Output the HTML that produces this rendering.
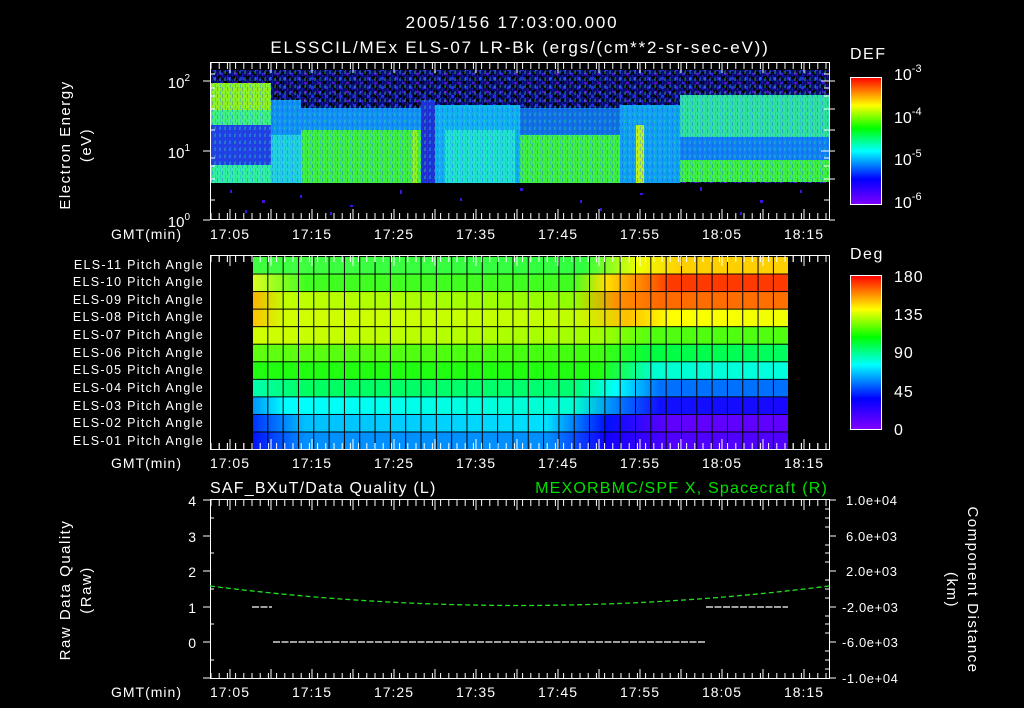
<!DOCTYPE html>
<html><head><meta charset="utf-8"><style>
html,body{margin:0;padding:0;background:#000;width:1024px;height:708px;overflow:hidden}
svg text{font-family:"Liberation Sans",sans-serif;fill:#fff}
</style></head><body>
<svg width="1024" height="708" xmlns="http://www.w3.org/2000/svg">
<defs>
<linearGradient id="cb" x1="0" y1="1" x2="0" y2="0">
<stop offset="0" stop-color="#8000ff"/><stop offset="0.2" stop-color="#0000ff"/><stop offset="0.42" stop-color="#00ffff"/><stop offset="0.6" stop-color="#00ff00"/><stop offset="0.78" stop-color="#ffff00"/><stop offset="1" stop-color="#ff0000"/>
</linearGradient>
<pattern id="noise" width="14" height="9" patternUnits="userSpaceOnUse">
<rect width="14" height="9" fill="#0a0a70"/><rect x="0" y="0" width="4" height="3" fill="#000"/><rect x="7" y="4" width="4" height="3" fill="#000"/><rect x="3" y="5" width="3" height="3" fill="#2828e0"/><rect x="10" y="1" width="3" height="2" fill="#5010c0"/><rect x="11" y="6" width="2" height="3" fill="#000"/>
</pattern>
<pattern id="vn" width="5" height="7" patternUnits="userSpaceOnUse">
<rect x="0" y="0" width="1" height="4" fill="#20a0ff" opacity="0.45"/><rect x="2" y="3" width="1" height="4" fill="#2040ff" opacity="0.35"/><rect x="4" y="1" width="1" height="3" fill="#40ff80" opacity="0.3"/>
</pattern>
</defs>

<g letter-spacing="1.8"><text x="512" y="28" font-size="17" text-anchor="middle">2005/156 17:03:00.000</text>
<text x="520" y="53" font-size="17" text-anchor="middle">ELSSCIL/MEx ELS-07 LR-Bk  (ergs/(cm**2-sr-sec-eV))</text></g>

<!-- top spectrogram -->
<rect x="211" y="70" width="618" height="113" fill="url(#noise)"/>
<rect x="211" y="83" width="60" height="40" fill="#90f020"/>
<rect x="211" y="110" width="60" height="15" fill="#40f080"/>
<rect x="211" y="125" width="60" height="40" fill="#2040e0"/>
<rect x="211" y="165" width="60" height="18" fill="#30f0a0"/>
<rect x="271" y="100" width="30" height="35" fill="#1090f0"/>
<rect x="271" y="135" width="30" height="48" fill="#20d0e0"/>
<rect x="301" y="108" width="120" height="25" fill="#1090f0"/>
<rect x="301" y="130" width="120" height="53" fill="#40f040"/>
<rect x="412" y="130" width="6" height="53" fill="#90f020"/>
<rect x="421" y="100" width="14" height="83" fill="#2030d0"/>
<rect x="435" y="105" width="85" height="78" fill="#10b0f0"/>
<rect x="445" y="130" width="70" height="53" fill="#20e0d0"/>
<rect x="520" y="108" width="100" height="27" fill="#1070e0"/>
<rect x="520" y="135" width="100" height="48" fill="#40f040"/>
<rect x="620" y="105" width="60" height="78" fill="#10a0f0"/>
<rect x="636" y="125" width="8" height="58" fill="#c0f020"/>
<rect x="680" y="95" width="149" height="42" fill="#30e0a0"/>
<rect x="680" y="137" width="149" height="23" fill="#1080f0"/>
<rect x="680" y="160" width="149" height="22" fill="#40f040"/>
<rect x="211" y="70" width="618" height="113" fill="url(#vn)"/>
<rect x="211" y="183" width="618" height="36" fill="#000"/>
<g fill="#4010e0"><rect x="230" y="190" width="2" height="3"/><rect x="262" y="200" width="3" height="3"/><rect x="300" y="195" width="2" height="3"/><rect x="350" y="205" width="3" height="2"/><rect x="400" y="190" width="2" height="4"/><rect x="460" y="198" width="2" height="3"/><rect x="520" y="188" width="3" height="3"/><rect x="580" y="200" width="2" height="3"/><rect x="640" y="193" width="3" height="2"/><rect x="700" y="187" width="2" height="4"/><rect x="760" y="200" width="3" height="3"/><rect x="800" y="190" width="2" height="3"/><rect x="245" y="210" width="2" height="3"/><rect x="330" y="212" width="2" height="3"/><rect x="600" y="208" width="2" height="3"/><rect x="740" y="212" width="2" height="3"/></g>
<g stroke="#fff" fill="none">
<path d="M210 66H829M210 216H829M210 259H829M210 446H829M210 503H829M210 676H829" stroke-width="6" stroke-dasharray="1,7.2" stroke-dashoffset="-0.5"/>
<path d="M210 68H829M210 214H829M210 261H829M210 444H829M210 505H829M210 674H829" stroke-width="10" stroke-dasharray="1,40" stroke-dashoffset="-19.5"/>
</g>
<rect x="210.5" y="62.5" width="619" height="157" fill="none" stroke="#fff"/>
<g stroke="#fff"><path d="M203 81h7M203 151h7M203 220h7M210 74h5M210 88h5M210 96h5M210 109h5M210 130h5M210 158h5M210 166h5M210 179h5M210 200h5M829 74h-5M829 81h-8M829 88h-5M829 96h-5M829 109h-5M829 130h-5M829 151h-8M829 158h-5M829 166h-5M829 179h-5M829 200h-5M829 81h6M829 151h6M829 220h6M829 109h6M829 130h6M829 179h6"/></g>
<text x="190" y="88" font-size="15" text-anchor="end">10<tspan dy="-7" font-size="10">2</tspan></text>
<text x="190" y="158" font-size="15" text-anchor="end">10<tspan dy="-7" font-size="10">1</tspan></text>
<text x="190" y="227" font-size="15" text-anchor="end">10<tspan dy="-7" font-size="10">0</tspan></text>
<g letter-spacing="1.5"><text transform="translate(70,145) rotate(-90)" font-size="15" text-anchor="middle">Electron Energy</text>
<text transform="translate(91,145) rotate(-90)" font-size="15" text-anchor="middle">(eV)</text></g>

<text x="850" y="59" font-size="16" letter-spacing="1.5">DEF</text>
<rect x="850.5" y="77.5" width="31" height="127" fill="url(#cb)" stroke="#fff"/>
<text x="894" y="80" font-size="16">10<tspan dy="-8" font-size="11">-3</tspan></text>
<text x="894" y="123" font-size="16">10<tspan dy="-8" font-size="11">-4</tspan></text>
<text x="894" y="165" font-size="16">10<tspan dy="-8" font-size="11">-5</tspan></text>
<text x="894" y="208" font-size="16">10<tspan dy="-8" font-size="11">-6</tspan></text>

<g font-size="14" text-anchor="middle" letter-spacing="1"><text x="230" y="239">17:05</text><text x="312" y="239">17:15</text><text x="394" y="239">17:25</text><text x="476" y="239">17:35</text><text x="558" y="239">17:45</text><text x="640" y="239">17:55</text><text x="722" y="239">18:05</text><text x="804" y="239">18:15</text></g>
<text x="182" y="239" font-size="14" text-anchor="end" letter-spacing="1">GMT(min)</text>

<!-- pitch angle -->
<defs>
<linearGradient id="r11"><stop offset="0" stop-color="#40ff40"/><stop offset="0.62" stop-color="#30ff40"/><stop offset="0.72" stop-color="#f0ff00"/><stop offset="0.8" stop-color="#ffd000"/><stop offset="1" stop-color="#ffd000"/></linearGradient>
<linearGradient id="r10"><stop offset="0" stop-color="#e0ff20"/><stop offset="0.1" stop-color="#40ff20"/><stop offset="0.6" stop-color="#40ff20"/><stop offset="0.66" stop-color="#ffe000"/><stop offset="0.78" stop-color="#ff3a00"/><stop offset="1" stop-color="#ff3a00"/></linearGradient>
<linearGradient id="r09"><stop offset="0" stop-color="#ffb000"/><stop offset="0.06" stop-color="#c0ff00"/><stop offset="0.6" stop-color="#90ff00"/><stop offset="0.68" stop-color="#ff9000"/><stop offset="0.76" stop-color="#ff6a00"/><stop offset="1" stop-color="#ff7000"/></linearGradient>
<linearGradient id="r08"><stop offset="0" stop-color="#ffc000"/><stop offset="0.06" stop-color="#d0ff00"/><stop offset="0.6" stop-color="#c0ff00"/><stop offset="0.7" stop-color="#ffc000"/><stop offset="0.78" stop-color="#ffff00"/><stop offset="1" stop-color="#f0ff00"/></linearGradient>
<linearGradient id="r07"><stop offset="0" stop-color="#d0ff00"/><stop offset="0.65" stop-color="#a0ff00"/><stop offset="0.75" stop-color="#50ff10"/><stop offset="1" stop-color="#50ff10"/></linearGradient>
<linearGradient id="r06"><stop offset="0" stop-color="#60ff10"/><stop offset="0.65" stop-color="#40ff10"/><stop offset="0.75" stop-color="#00ff40"/><stop offset="1" stop-color="#00ff60"/></linearGradient>
<linearGradient id="r05"><stop offset="0" stop-color="#20ff10"/><stop offset="0.65" stop-color="#20ff10"/><stop offset="0.75" stop-color="#00ffd0"/><stop offset="1" stop-color="#00ffe0"/></linearGradient>
<linearGradient id="r04"><stop offset="0" stop-color="#00ffb0"/><stop offset="0.1" stop-color="#00ff60"/><stop offset="0.6" stop-color="#00ff70"/><stop offset="0.68" stop-color="#00ffff"/><stop offset="0.76" stop-color="#0070ff"/><stop offset="1" stop-color="#0070ff"/></linearGradient>
<linearGradient id="r03"><stop offset="0" stop-color="#0090ff"/><stop offset="0.06" stop-color="#00ffff"/><stop offset="0.6" stop-color="#00ffd0"/><stop offset="0.68" stop-color="#0080ff"/><stop offset="0.76" stop-color="#1010ff"/><stop offset="1" stop-color="#1808ff"/></linearGradient>
<linearGradient id="r02"><stop offset="0" stop-color="#0030ff"/><stop offset="0.1" stop-color="#00c0ff"/><stop offset="0.55" stop-color="#00e0ff"/><stop offset="0.66" stop-color="#0010ff"/><stop offset="0.78" stop-color="#6000ff"/><stop offset="1" stop-color="#6000ff"/></linearGradient>
<linearGradient id="r01"><stop offset="0" stop-color="#0010ff"/><stop offset="0.1" stop-color="#0090ff"/><stop offset="0.55" stop-color="#0090ff"/><stop offset="0.66" stop-color="#1000ff"/><stop offset="0.78" stop-color="#5000ff"/><stop offset="1" stop-color="#5000ff"/></linearGradient>
<pattern id="grid" x="252" y="256" width="15.32" height="17.55" patternUnits="userSpaceOnUse"><path d="M0 0V17.55M0 0H15.32" stroke="#000" stroke-width="2" fill="none"/></pattern>
</defs>
<rect x="252" y="256" width="536" height="17.5" fill="url(#r11)"/>
<rect x="252" y="273.5" width="536" height="17.6" fill="url(#r10)"/>
<rect x="252" y="291.1" width="536" height="17.6" fill="url(#r09)"/>
<rect x="252" y="308.7" width="536" height="17.6" fill="url(#r08)"/>
<rect x="252" y="326.3" width="536" height="17.6" fill="url(#r07)"/>
<rect x="252" y="343.9" width="536" height="17.6" fill="url(#r06)"/>
<rect x="252" y="361.5" width="536" height="17.6" fill="url(#r05)"/>
<rect x="252" y="379.1" width="536" height="17.6" fill="url(#r04)"/>
<rect x="252" y="396.7" width="536" height="17.6" fill="url(#r03)"/>
<rect x="252" y="414.3" width="536" height="17.6" fill="url(#r02)"/>
<rect x="252" y="431.9" width="536" height="17.6" fill="url(#r01)"/>
<rect x="252" y="256" width="537" height="194" fill="url(#grid)"/>
<g stroke="#fff" fill="none">
<path d="M210 259H829M210 446H829" stroke-width="6" stroke-dasharray="1,7.2" stroke-dashoffset="-0.5"/>
<path d="M210 261H829M210 444H829" stroke-width="10" stroke-dasharray="1,40" stroke-dashoffset="-19.5"/>
</g>
<rect x="210.5" y="255.5" width="619" height="194" fill="none" stroke="#fff"/>
<g font-size="12.5" text-anchor="end" letter-spacing="1.3">
<text x="204" y="269">ELS-11 Pitch Angle</text><text x="204" y="286">ELS-10 Pitch Angle</text><text x="204" y="304">ELS-09 Pitch Angle</text><text x="204" y="321">ELS-08 Pitch Angle</text><text x="204" y="339">ELS-07 Pitch Angle</text><text x="204" y="357">ELS-06 Pitch Angle</text><text x="204" y="374">ELS-05 Pitch Angle</text><text x="204" y="392">ELS-04 Pitch Angle</text><text x="204" y="410">ELS-03 Pitch Angle</text><text x="204" y="427">ELS-02 Pitch Angle</text><text x="204" y="445">ELS-01 Pitch Angle</text></g>
<text x="850" y="259" font-size="16" letter-spacing="1.5">Deg</text>
<rect x="850.5" y="275.5" width="31" height="154" fill="url(#cb)" stroke="#fff"/>
<g font-size="16" letter-spacing="1"><text x="894" y="282">180</text><text x="894" y="320">135</text><text x="894" y="358">90</text><text x="894" y="397">45</text><text x="894" y="435">0</text></g>
<g font-size="14" text-anchor="middle" letter-spacing="1"><text x="230" y="468">17:05</text><text x="312" y="468">17:15</text><text x="394" y="468">17:25</text><text x="476" y="468">17:35</text><text x="558" y="468">17:45</text><text x="640" y="468">17:55</text><text x="722" y="468">18:05</text><text x="804" y="468">18:15</text></g>
<text x="182" y="468" font-size="14" text-anchor="end" letter-spacing="1">GMT(min)</text>

<!-- bottom panel -->
<text x="210" y="493" font-size="16" letter-spacing="1.2">SAF_BXuT/Data Quality (L)</text>
<text x="828" y="493" font-size="16" text-anchor="end" letter-spacing="1.2" style="fill:#00e000">MEXORBMC/SPF X, Spacecraft (R)</text>
<rect x="210.5" y="499.5" width="619" height="179" fill="none" stroke="#fff"/>
<g stroke="#fff"><path d="M203 500h7M203 536h7M203 571h7M203 607h7M203 642h7M203 678h7M829 500h7M829 536h7M829 571h7M829 607h7M829 642h7M829 678h7M210 518h4M210 553h4M210 589h4M210 624h4M210 660h4M829 509h-4M829 518h-4M829 527h-4M829 545h-4M829 553h-4M829 562h-4M829 580h-4M829 589h-4M829 598h-4M829 616h-4M829 624h-4M829 633h-4M829 651h-4M829 660h-4M829 669h-4"/></g>
<path d="M210 586 Q520 625 829 586" stroke="#20e020" stroke-width="1.3" stroke-dasharray="5,3" fill="none"/>
<path d="M252 607h20M706 607h82M273 642h433" stroke="#fff" stroke-width="1.2" stroke-dasharray="7,1.5" fill="none"/>
<g font-size="14" text-anchor="end"><text x="196" y="506">4</text><text x="196" y="542">3</text><text x="196" y="577">2</text><text x="196" y="613">1</text><text x="196" y="648">0</text></g>
<g font-size="13" letter-spacing="0.6"><text x="846" y="505">1.0e+04</text><text x="846" y="541">6.0e+03</text><text x="846" y="576">2.0e+03</text><text x="842" y="612">-2.0e+03</text><text x="842" y="647">-6.0e+03</text><text x="842" y="683">-1.0e+04</text></g>
<g letter-spacing="1.5"><text transform="translate(70,590) rotate(-90)" font-size="15" text-anchor="middle">Raw Data Quality</text>
<text transform="translate(91,590) rotate(-90)" font-size="15" text-anchor="middle">(Raw)</text>
<text transform="translate(968,590) rotate(90)" font-size="15" text-anchor="middle">Component Distance</text>
<text transform="translate(947,590) rotate(90)" font-size="15" text-anchor="middle">(km)</text></g>
<g font-size="14" text-anchor="middle" letter-spacing="1"><text x="230" y="697">17:05</text><text x="312" y="697">17:15</text><text x="394" y="697">17:25</text><text x="476" y="697">17:35</text><text x="558" y="697">17:45</text><text x="640" y="697">17:55</text><text x="722" y="697">18:05</text><text x="804" y="697">18:15</text></g>
<text x="182" y="697" font-size="14" text-anchor="end" letter-spacing="1">GMT(min)</text>
</svg>
</body></html>
